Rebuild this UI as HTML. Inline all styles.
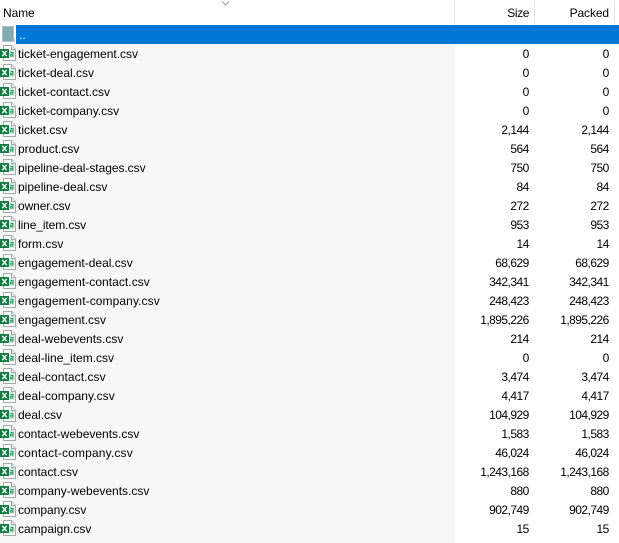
<!DOCTYPE html>
<html><head><meta charset="utf-8">
<style>
html,body{margin:0;padding:0;background:#fff}
#w{position:relative;width:619px;height:543px;overflow:hidden;background:#fff;font:12px/19px "Liberation Sans",sans-serif;color:#000}
#l{position:absolute;left:0;top:44px;width:455px;height:499px;background:#f7f7f7}
.v{position:absolute;top:0;width:1px;height:25px;background:#e5e5e5}
.h{position:absolute;top:5px;line-height:17px}
#s{position:absolute;left:16px;top:25px;width:603px;height:19px;background:#0078d7}
.r{position:absolute;left:0;width:619px;height:19px}
.r span{position:absolute;top:1px;white-space:nowrap}
.n{left:18px}
.a{right:90.300px;letter-spacing:-.55px}
.b{right:10.300px;letter-spacing:-.55px}
.r svg{position:absolute;left:0;top:1px}
</style></head><body>
<div id="w">
<svg width="619" height="10" style="position:absolute;left:0;top:0"><path d="M222 1.500L225.500 5 229 1.500" fill="none" stroke="#a0a0a0" stroke-width="1"/></svg>
<div class="h" style="left:3px;letter-spacing:-.1px">Name</div>
<div class="h" style="right:90px;letter-spacing:-.4px">Size</div>
<div class="h" style="right:10px;letter-spacing:-.1px">Packed</div>
<div class="v" style="left:454px"></div><div class="v" style="left:534px"></div><div class="v" style="left:614px"></div>
<div id="l"></div>
<svg width="16" height="18" style="position:absolute;left:2px;top:26px"><path d="M.500 .500H11.500V15.500H.500Z" fill="#84acb0" stroke="#a9c2c4"/><path d="M12.500 11V15.500H9" fill="none" stroke="#c4d6d7"/></svg>
<div id="s"><span style="position:absolute;left:3px;top:1px;color:#fff">..</span></div>
<svg width="0" height="0" style="position:absolute"><defs><g id="x">
<path d="M3.500 .500H11.500L15.500 4.500V15.500H3.500Z" fill="#fff" stroke="#a3aca8"/>
<path d="M11.500 .500V4.500H15.500" fill="#e8eeea" stroke="#a3aca8"/>
<rect x="9" y="5" width="5.500" height="8" fill="#d4eadf"/>
<rect x="0" y="4" width="9" height="9" fill="#107c41"/>
<path d="M2.300 5.800L6.700 11.200M6.700 5.800L2.300 11.200" stroke="#fff" stroke-width="1.300"/>
<path d="M10.500 7.500H13V11H10.500V9.200H13" fill="none" stroke="#21a366"/>
</g></defs></svg>
<div class="r" style="top:44px"><svg width="16" height="18"><use href="#x"/></svg><span class="n">ticket-engagement.csv</span><span class="a">0</span><span class="b">0</span></div>
<div class="r" style="top:63px"><svg width="16" height="18"><use href="#x"/></svg><span class="n">ticket-deal.csv</span><span class="a">0</span><span class="b">0</span></div>
<div class="r" style="top:82px"><svg width="16" height="18"><use href="#x"/></svg><span class="n">ticket-contact.csv</span><span class="a">0</span><span class="b">0</span></div>
<div class="r" style="top:101px"><svg width="16" height="18"><use href="#x"/></svg><span class="n">ticket-company.csv</span><span class="a">0</span><span class="b">0</span></div>
<div class="r" style="top:120px"><svg width="16" height="18"><use href="#x"/></svg><span class="n">ticket.csv</span><span class="a">2,144</span><span class="b">2,144</span></div>
<div class="r" style="top:139px"><svg width="16" height="18"><use href="#x"/></svg><span class="n">product.csv</span><span class="a">564</span><span class="b">564</span></div>
<div class="r" style="top:158px"><svg width="16" height="18"><use href="#x"/></svg><span class="n" style="letter-spacing:-.05px">pipeline-deal-stages.csv</span><span class="a">750</span><span class="b">750</span></div>
<div class="r" style="top:177px"><svg width="16" height="18"><use href="#x"/></svg><span class="n">pipeline-deal.csv</span><span class="a">84</span><span class="b">84</span></div>
<div class="r" style="top:196px"><svg width="16" height="18"><use href="#x"/></svg><span class="n" style="letter-spacing:-.1px">owner.csv</span><span class="a">272</span><span class="b">272</span></div>
<div class="r" style="top:215px"><svg width="16" height="18"><use href="#x"/></svg><span class="n" style="letter-spacing:-.1px">line_item.csv</span><span class="a">953</span><span class="b">953</span></div>
<div class="r" style="top:234px"><svg width="16" height="18"><use href="#x"/></svg><span class="n">form.csv</span><span class="a">14</span><span class="b">14</span></div>
<div class="r" style="top:253px"><svg width="16" height="18"><use href="#x"/></svg><span class="n">engagement-deal.csv</span><span class="a">68,629</span><span class="b">68,629</span></div>
<div class="r" style="top:272px"><svg width="16" height="18"><use href="#x"/></svg><span class="n" style="letter-spacing:.05px">engagement-contact.csv</span><span class="a">342,341</span><span class="b">342,341</span></div>
<div class="r" style="top:291px"><svg width="16" height="18"><use href="#x"/></svg><span class="n" style="letter-spacing:.09px">engagement-company.csv</span><span class="a">248,423</span><span class="b">248,423</span></div>
<div class="r" style="top:310px"><svg width="16" height="18"><use href="#x"/></svg><span class="n">engagement.csv</span><span class="a">1,895,226</span><span class="b">1,895,226</span></div>
<div class="r" style="top:329px"><svg width="16" height="18"><use href="#x"/></svg><span class="n">deal-webevents.csv</span><span class="a">214</span><span class="b">214</span></div>
<div class="r" style="top:348px"><svg width="16" height="18"><use href="#x"/></svg><span class="n">deal-line_item.csv</span><span class="a">0</span><span class="b">0</span></div>
<div class="r" style="top:367px"><svg width="16" height="18"><use href="#x"/></svg><span class="n" style="letter-spacing:.06px">deal-contact.csv</span><span class="a">3,474</span><span class="b">3,474</span></div>
<div class="r" style="top:386px"><svg width="16" height="18"><use href="#x"/></svg><span class="n" style="letter-spacing:.06px">deal-company.csv</span><span class="a">4,417</span><span class="b">4,417</span></div>
<div class="r" style="top:405px"><svg width="16" height="18"><use href="#x"/></svg><span class="n">deal.csv</span><span class="a">104,929</span><span class="b">104,929</span></div>
<div class="r" style="top:424px"><svg width="16" height="18"><use href="#x"/></svg><span class="n">contact-webevents.csv</span><span class="a">1,583</span><span class="b">1,583</span></div>
<div class="r" style="top:443px"><svg width="16" height="18"><use href="#x"/></svg><span class="n" style="letter-spacing:.16px">contact-company.csv</span><span class="a">46,024</span><span class="b">46,024</span></div>
<div class="r" style="top:462px"><svg width="16" height="18"><use href="#x"/></svg><span class="n">contact.csv</span><span class="a">1,243,168</span><span class="b">1,243,168</span></div>
<div class="r" style="top:481px"><svg width="16" height="18"><use href="#x"/></svg><span class="n">company-webevents.csv</span><span class="a">880</span><span class="b">880</span></div>
<div class="r" style="top:500px"><svg width="16" height="18"><use href="#x"/></svg><span class="n" style="letter-spacing:-.08px">company.csv</span><span class="a">902,749</span><span class="b">902,749</span></div>
<div class="r" style="top:519px"><svg width="16" height="18"><use href="#x"/></svg><span class="n">campaign.csv</span><span class="a">15</span><span class="b">15</span></div>
</div>
</body></html>
